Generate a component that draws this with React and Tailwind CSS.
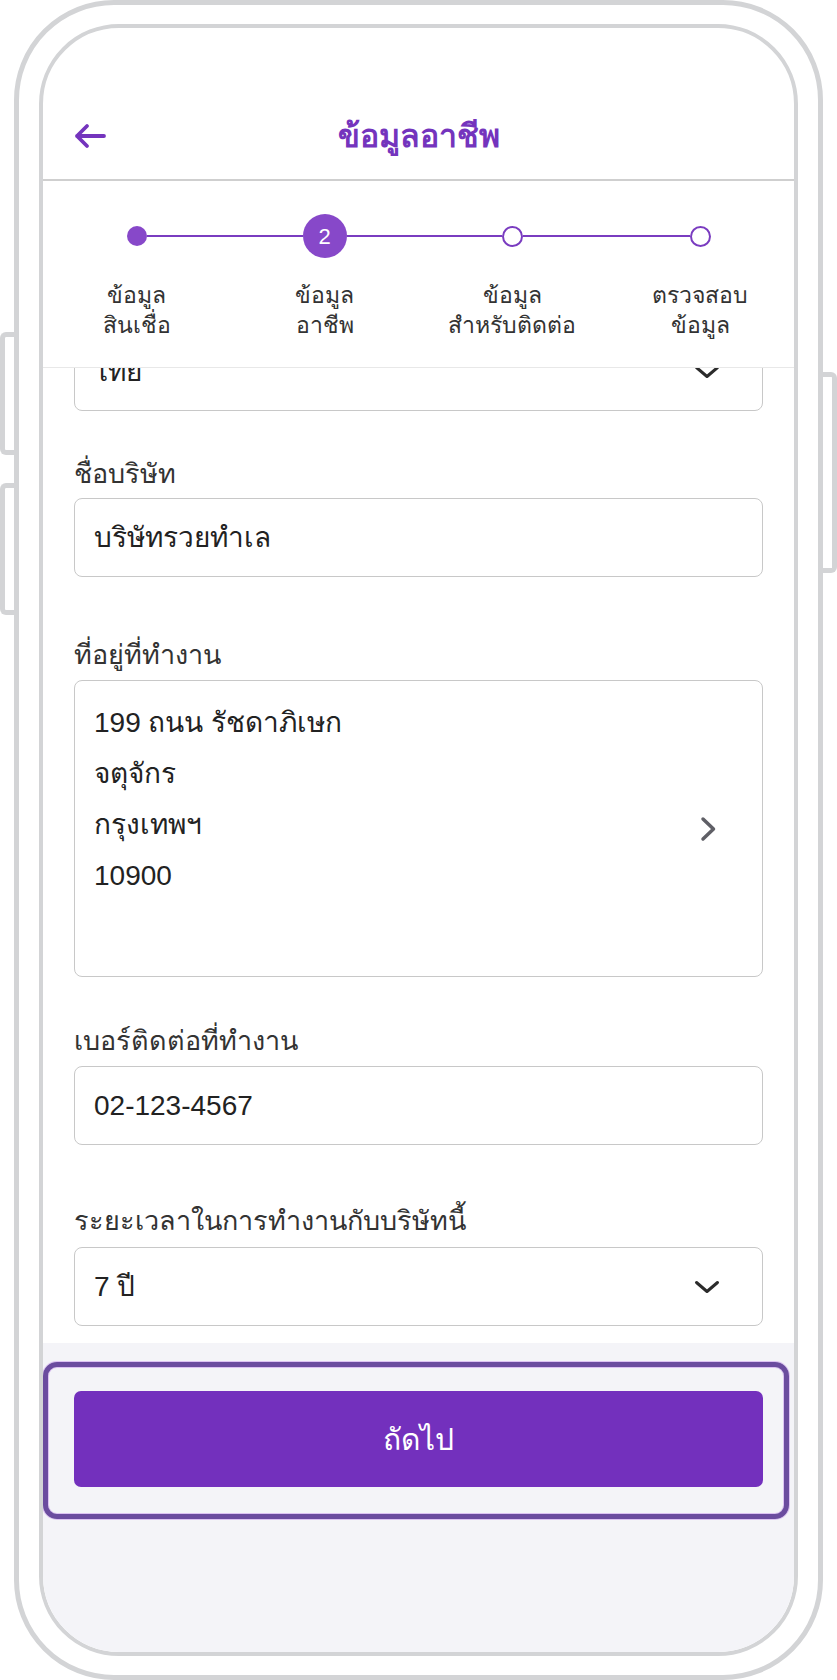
import React from "react";

const steps = [
  { label: ["ข้อมูล", "สินเชื่อ"], state: "done" },
  { label: ["ข้อมูล", "อาชีพ"], state: "current" },
  { label: ["ข้อมูล", "สำหรับติดต่อ"], state: "todo" },
  { label: ["ตรวจสอบ", "ข้อมูล"], state: "todo" },
];

function ChevronDown() {
  return (
    <svg width="26" height="14" viewBox="0 0 26 14" fill="none">
      <path d="M2.5 2.5 L13 11.5 L23.5 2.5" stroke="#2b2b2b" strokeWidth="3" strokeLinecap="round" strokeLinejoin="round" />
    </svg>
  );
}

function ChevronRight() {
  return (
    <svg width="17" height="26" viewBox="0 0 17 26" fill="none">
      <path d="M3 3 L13.5 13 L3 23" stroke="#5f5f66" strokeWidth="3.5" strokeLinecap="round" strokeLinejoin="round" />
    </svg>
  );
}

function StepDot({ state, n }) {
  if (state === "current") {
    return (
      <div className="w-[44px] h-[44px] rounded-full bg-[#8748c9] flex items-center justify-center text-white text-[22px] shrink-0">
        {n}
      </div>
    );
  }
  if (state === "done") {
    return <div className="w-[20px] h-[20px] rounded-full bg-[#8748c9] shrink-0" />;
  }
  return <div className="w-[21px] h-[21px] rounded-full border-2 border-[#7a3cc0] bg-white shrink-0" />;
}

function Label({ children, className }) {
  return <div className={`text-[27px] leading-[36px] text-[#333333] ${className}`}>{children}</div>;
}

function Box({ children, className = "" }) {
  return (
    <div className={`border-[1.5px] border-[#c8c8c8] rounded-[8px] bg-white ${className}`}>{children}</div>
  );
}

export default function App() {
  return (
    <div className="relative w-[837px] h-[1680px] bg-white overflow-hidden" style={{ fontFamily: '"Liberation Sans", "Noto Sans", sans-serif' }}>
      {/* side buttons */}
      <div className="absolute left-0 top-[332px] w-[19px] h-[123px] border-[5px] border-r-0 border-[#d3d4d6] rounded-l-[6px] bg-white" />
      <div className="absolute left-0 top-[483px] w-[19px] h-[132px] border-[5px] border-r-0 border-[#d3d4d6] rounded-l-[6px] bg-white" />
      <div className="absolute left-[818px] top-[372px] w-[19px] h-[201px] border-[5px] border-l-0 border-[#d3d4d6] rounded-r-[6px] bg-white" />

      {/* phone body */}
      <div className="relative ml-[14px] w-[809px] h-[1680px] border-[5px] border-[#d3d4d6] rounded-[100px] pt-[19px] px-[20px] pb-[19px] bg-white">
        <div className="h-full border-[4px] border-[#d3d4d6] rounded-[80px] overflow-hidden flex flex-col bg-white">
          {/* header */}
          <div className="h-[153px] shrink-0 border-b-2 border-[#cfcfcf] pt-[64px]">
            <div className="h-[87px] grid grid-cols-[1fr_auto_1fr] items-center">
              <div className="pl-[30px]">
                <svg width="34" height="26" viewBox="0 0 34 26" fill="none">
                  <path d="M31 13 H4 M14 3 L4 13 L14 23" stroke="#7434bd" strokeWidth="3.8" strokeLinecap="round" strokeLinejoin="round" />
                </svg>
              </div>
              <div className="text-[32px] font-bold text-[#7434bd]">ข้อมูลอาชีพ</div>
              <div />
            </div>
          </div>

          {/* stepper */}
          <div className="h-[187px] shrink-0 border-b border-[#e8e8e8] pt-[33px] grid grid-cols-4">
            {steps.map((s, i) => (
              <div key={i} className="flex flex-col items-center">
                <div className="w-full h-[44px] flex items-center">
                  <div className={`flex-1 h-[2px] ${i === 0 ? "bg-transparent" : "bg-[#7a3cc0]"}`} />
                  <StepDot state={s.state} n={i + 1} />
                  <div className={`flex-1 h-[2px] ${i === 3 ? "bg-transparent" : "bg-[#7a3cc0]"}`} />
                </div>
                <div className="mt-[22px] text-center text-[23px] leading-[30px] text-[#333333]">
                  <div>{s.label[0]}</div>
                  <div>{s.label[1]}</div>
                </div>
              </div>
            ))}
          </div>

          {/* form (scrolled) */}
          <div className="flex-1 min-h-0 overflow-hidden">
            <div className="-mt-[36px] px-[31px]">
              <Box className="h-[79px] flex items-center justify-between pl-[19px] pr-[42px]">
                <span className="text-[28px] text-[#222222]">ไทย</span>
                <ChevronDown />
              </Box>

              <Label className="mt-[45px] mb-[6px]">ชื่อบริษัท</Label>
              <Box className="h-[79px] flex items-center pl-[19px]">
                <span className="text-[28px] text-[#222222]">บริษัทรวยทำเล</span>
              </Box>

              <Label className="mt-[60px] mb-[7px]">ที่อยู่ที่ทำงาน</Label>
              <Box className="h-[297px] flex items-center justify-between pl-[19px] pr-[45px]">
                <div className="self-start pt-[16px] text-[28px] leading-[51px] text-[#222222]">
                  <div>199 ถนน รัชดาภิเษก</div>
                  <div>จตุจักร</div>
                  <div>กรุงเทพฯ</div>
                  <div>10900</div>
                </div>
                <ChevronRight />
              </Box>

              <Label className="mt-[46px] mb-[7px]">เบอร์ติดต่อที่ทำงาน</Label>
              <Box className="h-[79px] flex items-center pl-[19px]">
                <span className="text-[28px] text-[#222222]">02-123-4567</span>
              </Box>

              <Label className="mt-[58px] mb-[8px]">ระยะเวลาในการทำงานกับบริษัทนี้</Label>
              <Box className="h-[79px] flex items-center justify-between pl-[19px] pr-[42px]">
                <span className="text-[28px] text-[#222222]">7 ปี</span>
                <ChevronDown />
              </Box>
            </div>
          </div>

          {/* bottom action */}
          <div className="h-[309px] shrink-0 bg-[#f4f4f8] pt-[19px]">
            <div className="w-[746px] border-[5px] border-[#6b4c9f] rounded-[14px] pt-[24px] pb-[27px] pl-[26px] pr-[21px] shadow-[0_0_0_1px_#dcc2f2,inset_0_0_0_1px_#dcc2f2]">
              <button className="w-full h-[96px] rounded-[7px] bg-[#7330bd] text-white text-[30px] flex items-center justify-center">
                ถัดไป
              </button>
            </div>
          </div>
        </div>
      </div>
    </div>
  );
}
